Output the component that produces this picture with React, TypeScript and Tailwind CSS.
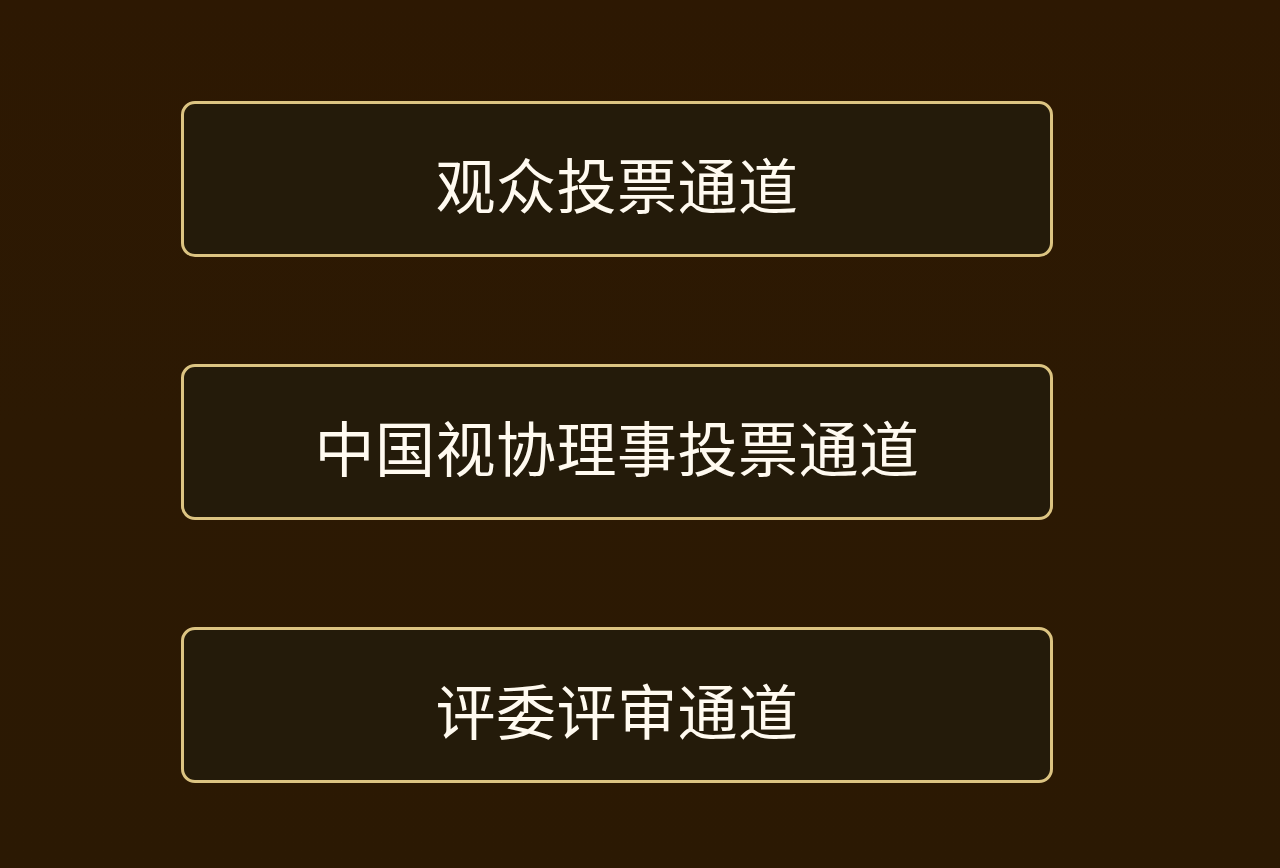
const channels = ["观众投票通道", "中国视协理事投票通道", "评委评审通道"];

export default function App() {
  return (
    <div
      className="min-h-[868px] w-full bg-gradient-to-b from-[#2d1802] via-[#2c1903] to-[#2b1903] pt-[101px] pl-[181px] flex flex-col gap-[107px]"
      style={{ fontFamily: '"Noto Sans CJK SC", "Noto Sans", sans-serif' }}
    >
      {channels.map((name) => (
        <button
          key={name}
          className="w-[872px] h-[156px] rounded-[14px] border-[3px] border-[#dcc482] bg-[#241b0a] flex items-center justify-center pt-[8px] text-[60px] leading-none tracking-[0.5px] text-[#fffaf0] font-normal"
        >
          {name}
        </button>
      ))}
    </div>
  );
}
